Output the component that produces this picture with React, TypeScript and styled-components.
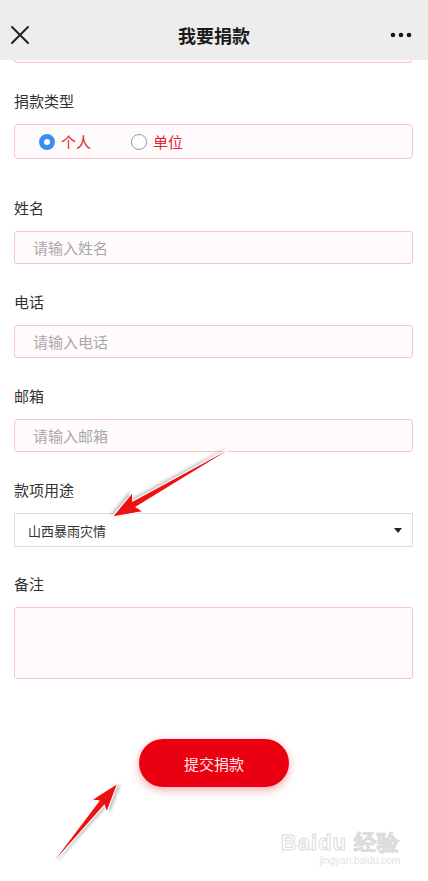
import React from "react";
import styled, { createGlobalStyle } from "styled-components";

const Global = createGlobalStyle`
  html, body { margin: 0; padding: 0; background: #fff; }
  body { font-family: "Noto Sans CJK SC", "Noto Sans", sans-serif; }
  * { box-sizing: border-box; }
`;

const Page = styled.div`
  position: relative;
  width: 428px;
  height: 881px;
  overflow: hidden;
  background: #fff;
`;

const Header = styled.header`
  height: 60px;
  padding-top: 10px;
  background: #ededed;
  display: grid;
  grid-template-columns: 60px 1fr 60px;
  align-items: center;
`;

const Title = styled.h1`
  margin: 0;
  text-align: center;
  font-size: 18px;
  font-weight: 700;
  color: #1b1b1b;
  line-height: 50px;
`;

const IconCell = styled.div<{ $align: "left" | "right" }>`
  display: flex;
  justify-content: ${(p) => (p.$align === "left" ? "flex-start" : "flex-end")};
  padding: ${(p) => (p.$align === "left" ? "0 0 0 10px" : "0 16px 0 0")};
  align-items: center;
  height: 50px;
`;

const Form = styled.main`
  padding: 0 14px 0 14px;
  display: flex;
  flex-direction: column;
`;

const TopCut = styled.div`
  height: 3px;
  border: 1px solid #f6c9cf;
  border-top: none;
  border-radius: 0 0 4px 4px;
  background: #fffafb;
  margin-right: 2px;
`;

const Field = styled.section<{ $gap: number }>`
  margin-top: ${(p) => p.$gap}px;
  display: flex;
  flex-direction: column;
`;

const Label = styled.div`
  font-size: 15px;
  line-height: 20px;
  color: #333;
  margin-bottom: 13px;
`;

const TextBox = styled.div<{ $h: number }>`
  height: ${(p) => p.$h}px;
  border: 1px solid #f6c6cd;
  border-radius: 3px;
  background: #fffafb;
  padding: 0 18px;
  display: flex;
  align-items: center;
  font-size: 15px;
  color: #a9a9a9;
  margin-right: 1px;
`;

const RadioBox = styled.div`
  height: 35px;
  border: 1px solid #f6c6cd;
  border-radius: 4px;
  background: #fffafb;
  padding-left: 24px;
  display: flex;
  align-items: center;
  gap: 40px;
  margin-right: 1px;
`;

const RadioItem = styled.label`
  display: flex;
  align-items: center;
  gap: 6px;
  font-size: 15px;
  color: #e0262d;
`;

const Dot = styled.span<{ $on: boolean }>`
  width: 16px;
  height: 16px;
  border-radius: 50%;
  border: ${(p) => (p.$on ? "5px solid #3a8ef0" : "1px solid #9a9a9a")};
  background: #fff;
`;

const Select = styled.div`
  height: 34px;
  border: 1px solid #dcdcdc;
  background: #fff;
  padding: 0 10px 0 13px;
  display: flex;
  align-items: center;
  justify-content: space-between;
  font-size: 13px;
  color: #333;
  margin-right: 1px;
`;

const Caret = styled.span`
  width: 0;
  height: 0;
  border-left: 4px solid transparent;
  border-right: 4px solid transparent;
  border-top: 5px solid #222;
`;

const ButtonRow = styled.div`
  margin-top: 60px;
  display: flex;
  justify-content: center;
`;

const Submit = styled.button`
  width: 150px;
  height: 48px;
  border: none;
  border-radius: 24px;
  background: #ea0010;
  color: #fde8ea;
  font-family: inherit;
  font-size: 15px;
  box-shadow: 0 3px 10px rgba(234, 0, 16, 0.35);
`;

const Overlay = styled.svg`
  position: absolute;
  left: 0;
  top: 0;
  pointer-events: none;
`;

const Watermark = styled.div`
  position: absolute;
  right: 28px;
  bottom: 14px;
  display: flex;
  flex-direction: column;
  align-items: flex-end;
  color: transparent;
  -webkit-text-stroke: 1px #dcdcdc;
  font-family: "Liberation Sans", sans-serif;
  pointer-events: none;
`;

const WmBig = styled.div`
  font-size: 22px;
  font-weight: 700;
  line-height: 24px;
  letter-spacing: 1px;
`;

const WmSmall = styled.div`
  font-size: 10px;
  line-height: 12px;
  color: #e2e2e2;
  -webkit-text-stroke: 0;
`;

function arrowPoints(L: number, hl: number, hw: number, sw: number) {
  return [
    [0, -0.6],
    [L - hl + 4, -sw],
    [L - hl, -hw],
    [L, 0],
    [L - hl, hw],
    [L - hl + 4, sw],
    [0, 0.6],
  ]
    .map((p) => p.join(","))
    .join(" ");
}

const Arrow: React.FC<{ x1: number; y1: number; x2: number; y2: number; hl: number; hw: number }> = ({
  x1,
  y1,
  x2,
  y2,
  hl,
  hw,
}) => {
  const dx = x2 - x1;
  const dy = y2 - y1;
  const L = Math.sqrt(dx * dx + dy * dy);
  const a = (Math.atan2(dy, dx) * 180) / Math.PI;
  return (
    <g transform={`translate(${x1} ${y1}) rotate(${a})`}>
      <polygon
        points={arrowPoints(L, hl, hw, 3.5)}
        fill="#000"
        opacity="0.25"
        transform="translate(1.5 2.5)"
        filter="url(#blur)"
      />
      <polygon
        points={arrowPoints(L, hl, hw, 3.5)}
        fill="#ee1111"
        stroke="#fff"
        strokeWidth="1.2"
        strokeLinejoin="miter"
      />
    </g>
  );
};

export default function App() {
  return (
    <Page>
      <Global />
      <Header>
        <IconCell $align="left">
          <svg width="20" height="20" viewBox="0 0 20 20">
            <path d="M2 2 L18 18 M18 2 L2 18" stroke="#222" strokeWidth="2" strokeLinecap="round" />
          </svg>
        </IconCell>
        <Title>我要捐款</Title>
        <IconCell $align="right">
          <svg width="22" height="6" viewBox="0 0 22 6">
            <circle cx="3" cy="3" r="2.3" fill="#1a1a1a" />
            <circle cx="11" cy="3" r="2.3" fill="#1a1a1a" />
            <circle cx="19" cy="3" r="2.3" fill="#1a1a1a" />
          </svg>
        </IconCell>
      </Header>
      <Form>
        <TopCut />
        <Field $gap={28}>
          <Label>捐款类型</Label>
          <RadioBox>
            <RadioItem>
              <Dot $on />
              个人
            </RadioItem>
            <RadioItem>
              <Dot $on={false} />
              单位
            </RadioItem>
          </RadioBox>
        </Field>
        <Field $gap={39}>
          <Label>姓名</Label>
          <TextBox $h={33}>请输入姓名</TextBox>
        </Field>
        <Field $gap={28}>
          <Label>电话</Label>
          <TextBox $h={33}>请输入电话</TextBox>
        </Field>
        <Field $gap={28}>
          <Label>邮箱</Label>
          <TextBox $h={33}>请输入邮箱</TextBox>
        </Field>
        <Field $gap={28}>
          <Label>款项用途</Label>
          <Select>
            山西暴雨灾情
            <Caret />
          </Select>
        </Field>
        <Field $gap={27}>
          <Label>备注</Label>
          <TextBox $h={72} />
        </Field>
        <ButtonRow>
          <Submit>提交捐款</Submit>
        </ButtonRow>
      </Form>
      <Watermark>
        <WmBig>Baidu 经验</WmBig>
        <WmSmall>jingyan.baidu.com</WmSmall>
      </Watermark>
      <Overlay width="428" height="881" viewBox="0 0 428 881">
        <defs>
          <filter id="blur" x="-20%" y="-20%" width="140%" height="140%">
            <feGaussianBlur stdDeviation="1.5" />
          </filter>
        </defs>
        <Arrow x1={228} y1={450} x2={112} y2={517} hl={30} hw={11} />
        <Arrow x1={55} y1={860} x2={118} y2={783} hl={30} hw={10} />
      </Overlay>
    </Page>
  );
}
